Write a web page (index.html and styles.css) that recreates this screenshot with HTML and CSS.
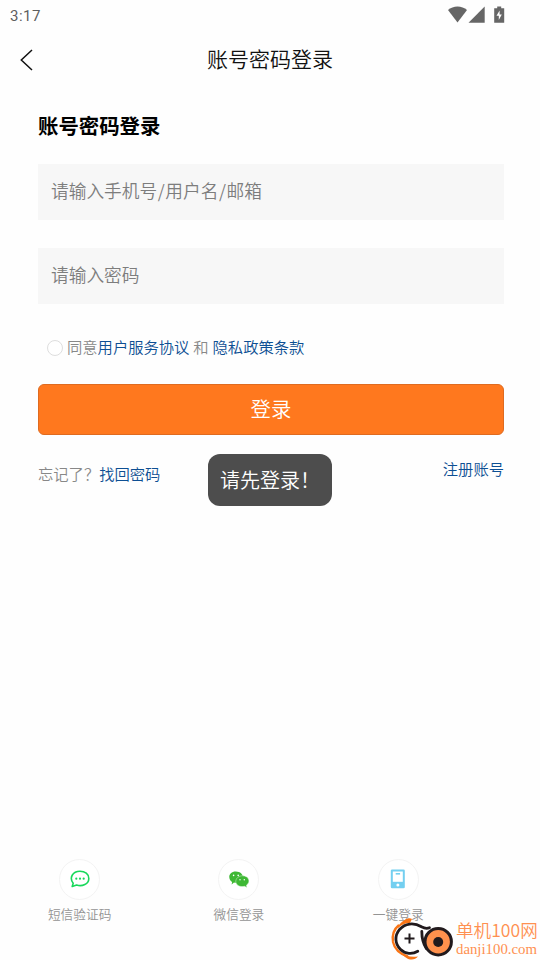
FILE: index.html
```html
<!DOCTYPE html>
<html lang="zh-CN">
<head>
<meta charset="utf-8">
<title>账号密码登录</title>
<link rel="stylesheet" href="styles.css">
</head>
<body>
<div class="screen">
  <div class="status">
    <span class="time">3:17</span>
    <svg class="status-icons" width="60" height="22" viewBox="0 0 60 22">
      <path fill="#666" d="M1 8C6 3.200 15 3.200 20 8L10.500 20.500Z"/>
      <path fill="#666" d="M37.700 4.500V20.700H21.500Z"/>
      <path fill="#666" d="M47.200 6.200h3V4.500h4v1.700h3v14.500H47.200Z"/>
      <path fill="#fff" d="M52.600 8.500v4h2.200l-3 5.500v-4.200h-2.300Z"/>
    </svg>
  </div>
  <header class="nav">
    <svg class="back" width="14" height="22" viewBox="0 0 14 22"><path d="M12 1 1.300 11 12 21" fill="none" stroke="#111" stroke-width="1.500"/></svg>
    <span class="title">账号密码登录</span>
  </header>
  <main class="form">
    <h1>账号密码登录</h1>
    <div class="field">请输入手机号<span class="slash">/</span>用户名<span class="slash">/</span>邮箱</div>
    <div class="field">请输入密码</div>
    <div class="agree"><span class="radio"></span><span class="agree-text">同意<a>用户服务协议</a> 和 <a>隐私政策条款</a></span></div>
    <div class="submit">登录</div>
    <div class="links"><span>忘记了？<a>找回密码</a></span><a class="register">注册账号</a></div>
  </main>
  <footer class="methods">
    <div class="method">
      <span class="circle"><svg width="20" height="18" viewBox="0 0 20 18"><path d="M3.200 13.200C-1 8 2.500 1.200 10 1.200c5 0 8.800 3 8.800 7.200 0 5.600-6.600 8.500-12.200 6.600L2.200 16.500Z" fill="none" stroke="#18d85b" stroke-width="1.600" stroke-linejoin="round"/><g fill="#18d85b"><circle cx="6.300" cy="8.700" r="1.100"/><circle cx="10" cy="8.700" r="1.100"/><circle cx="13.700" cy="8.700" r="1.100"/></g></svg></span>
      <span>短信验证码</span>
    </div>
    <div class="method">
      <span class="circle"><svg width="20" height="18" viewBox="0 0 20 18"><path fill="#3eb834" d="M2.600 14.600l.5-2.700C-1.800 8.500-.2 1.500 6.800 1.500c7.200 0 9.200 7 4.700 9.700C9.500 12.700 6.800 13 5 12.500Z"/><path fill="#3eb834" stroke="#fff" stroke-width=".4" d="M17.800 17.400l-2.300-1.100C11 17.500 6.800 15 6.800 11.400c0-3.200 3-5.600 6.600-5.600 6.600 0 8.600 6.300 4.100 9.300Z"/><g fill="#fff"><circle cx="4.600" cy="5.400" r=".8"/><circle cx="9.200" cy="5.400" r=".8"/><circle cx="11" cy="9.800" r=".7"/><circle cx="15.300" cy="9.800" r=".7"/></g></svg></span>
      <span>微信登录</span>
    </div>
    <div class="method">
      <span class="circle"><svg width="16" height="20" viewBox="0 0 16 20"><rect x=".8" y=".5" width="14" height="18.800" rx="1.300" fill="#73cff0"/><path fill="#fff" d="M2.800 2.500h10v10.300h-10Z"/><path fill="#73cff0" d="M5.700 4h4.400v1.600H5.700Z"/><circle cx="7.900" cy="16" r="1.500" fill="#fff"/></svg></span>
      <span>一键登录</span>
    </div>
  </footer>
  <div class="toast">请先登录！</div>
  <div class="watermark">
    <svg width="64" height="44" viewBox="0 0 64 44">
      <circle cx="20" cy="21.500" r="14" fill="#fff"/>
      <path d="M9 8C3 13 2 19 3 25c1.500 7 7 12 15 14.500" fill="none" stroke="#f97516" stroke-width="2.300"/>
      <path d="M8 9C14 2 19 0 22 2c-1 1.500-1.500 3.500-2.500 4C15 6 12 7.500 8 11Z" fill="#f97516"/>
      <path d="M9 35c6 4 12 5.500 19 4.500-3 4-9 4-13 .500Z" fill="#f97516"/>
      <path d="M39.500 10.800c-2.500 1-5 .7-8-1C23.500 5 15 6.500 9.800 12.200c-5.500 6.500-5 14.500.5 20 5 5 12 5.300 17.500 2" fill="none" stroke="#211a1d" stroke-width="2.800" stroke-linecap="round"/>
      <path d="M31.800 14.500c0 6 1.200 12 4.500 17" fill="none" stroke="#211a1d" stroke-width="2.800" stroke-linecap="round"/>
      <circle cx="48.200" cy="24.700" r="13.200" fill="#ff914d" stroke="#211a1d" stroke-width="3"/>
      <circle cx="48.200" cy="25" r="5" fill="#211a1d"/>
      <path d="M14.500 21.500h10M19.500 16.500v10" stroke="#211a1d" stroke-width="2"/>
    </svg>
    <div class="brand"><span class="brand-name">单机100网</span><span class="brand-url">danji100.com</span></div>
  </div>
</div>
</body>
</html>
```
FILE: styles.css
```css
* { box-sizing: border-box; }
body { margin: 0; background: #fff; font-family: "Noto Sans CJK SC", sans-serif; font-weight: 350; }
.screen { position: relative; width: 540px; height: 960px; overflow: hidden; background: #fefefe; display: flex; flex-direction: column; }
.status { height: 32px; padding: 2px 33px 0 10px; display: flex; justify-content: space-between; flex: none; }
.time { font: 400 15px/28px Roboto, sans-serif; color: #5f5f5f; letter-spacing: .5px; }
.nav { height: 54px; flex: none; display: grid; grid-template-columns: 60px 1fr 60px; align-items: center; }
.back { margin-left: 20px; margin-top: 2px; }
.title { text-align: center; font-size: 21px; line-height: 28px; padding-bottom: 2px; color: #111; }
.form { padding: 24px 36px 0 38px; flex: 1; }
h1 { margin: 0 0 24px; font-size: 20.4px; line-height: 30px; font-weight: 700; color: #000; }
.field { height: 56px; margin-bottom: 28px; padding: 0 13px; background: #f7f7f7; color: #7d7d7d; font-size: 17.7px; line-height: 53px; white-space: nowrap; }
.slash { padding: 0 .6px; }
.agree { height: 30px; padding-left: 9px; display: flex; align-items: center; gap: 4px; font-size: 15.3px; color: #888; line-height: 30px; white-space: pre; }
.agree-text { padding-bottom: 2px; word-spacing: .5px; }
.radio { width: 16px; height: 16px; margin-top: 2px; border: 1px solid #dedede; border-radius: 50%; background: #fff; }
a { color: #0d4f93; }
.submit { height: 51px; margin-top: 22px; background: #ff781e; border: 1px solid #df6b20; border-radius: 6px; color: #fff; text-align: center; font-size: 20.4px; line-height: 46px; }
.links { display: flex; justify-content: space-between; margin-top: 23px; font-size: 15.3px; line-height: 30px; color: #888; }
.register { margin-top: -5px; }
.methods { flex: none; height: 101px; display: flex; }
.method { width: 159.3px; display: flex; flex-direction: column; align-items: center; font-size: 12.7px; line-height: 20px; color: #949494; gap: 4px; }
.circle { width: 41px; height: 41px; border: 1px solid #f3f3f3; border-radius: 50%; background: #fff; display: flex; align-items: center; justify-content: center; padding-bottom: 1px; }
.toast { position: absolute; left: 208px; top: 454px; width: 124px; height: 52px; padding-left: 12px; border-radius: 12px; background: #4d4d4d; color: #fff; font-size: 20px; line-height: 52px; white-space: nowrap; }
.watermark { position: absolute; left: 390px; top: 917px; display: flex; }
.brand { display: flex; flex-direction: column; margin-left: 2px; color: #ff9050; white-space: nowrap; }
.brand-name { font-size: 17.600px; line-height: 26px; }
.brand-url { font: 14.800px/15px "Liberation Serif", serif; margin-top: -1px; }
```
